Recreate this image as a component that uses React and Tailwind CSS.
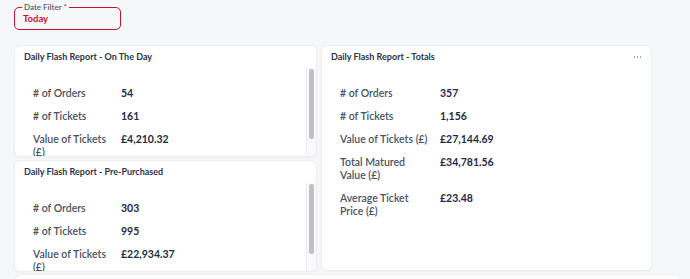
const onTheDay = [
  ['# of Orders', '54'],
  ['# of Tickets', '161'],
  ['Value of Tickets (£)', '£4,210.32'],
];

const prePurchased = [
  ['# of Orders', '303'],
  ['# of Tickets', '995'],
  ['Value of Tickets (£)', '£22,934.37'],
];

const totals = [
  ['# of Orders', '357'],
  ['# of Tickets', '1,156'],
  ['Value of Tickets (£)', '£27,144.69'],
  ['Total Matured Value (£)', '£34,781.56'],
  ['Average Ticket Price (£)', '£23.48'],
];

const Rows = ({ rows, labelWidth }) => (
  <div className="flex flex-col gap-[10px]">
    {rows.map(([label, value]) => (
      <div key={label} className="flex items-start leading-[13px]">
        <div className={`${labelWidth} shrink-0 pr-[10px] text-[10.5px] font-semibold text-[#4b5262]`}>{label}</div>
        <div className="text-[10.5px] font-bold text-[#232c45]">{value}</div>
      </div>
    ))}
  </div>
);

const ScrollCard = ({ title, rows }) => (
  <div className="h-[112px] bg-white rounded-[6px] border border-[#eceef2] shadow-[0_1px_2px_rgba(0,0,0,0.03)] overflow-hidden flex flex-col">
    <div className="h-[22px] shrink-0 flex items-center px-[9px] text-[9px] font-bold text-[#2b3349]">{title}</div>
    <div className="flex-1 flex min-h-0">
      <div className="flex-1 pl-[18px] pt-[19px] overflow-hidden">
        <Rows rows={rows} labelWidth="w-[88px]" />
      </div>
      <div className="w-[10px] shrink-0 border-l border-[#ececec] bg-[#fafafa] pt-[1px] pl-[2px]">
        <div className="w-[5px] h-[70px] rounded-[2px] bg-[#c1c1c1]" />
      </div>
    </div>
  </div>
);

export default function App() {
  return (
    <div className="min-h-screen bg-[#f6f7f9] font-['Lato',sans-serif] pl-[14px] pr-[10px] pt-[7px]">
      <div className="relative w-[107px] h-[23px] border-[1.5px] border-[#c8102e] rounded-[5px]">
        <span className="absolute -top-[6px] left-[7px] px-[2px] bg-[#f6f7f9] text-[8px] leading-[10px] font-semibold text-[#555b68]">Date Filter *</span>
        <div className="pl-[8px] pt-[5px] text-[9.5px] leading-[11px] font-bold text-[#c8102e]">Today</div>
      </div>

      <div className="flex gap-[4px] mt-[15px]">
        <div className="w-[303px] flex flex-col gap-[3px]">
          <ScrollCard title="Daily Flash Report - On The Day" rows={onTheDay} />
          <ScrollCard title="Daily Flash Report - Pre-Purchased" rows={prePurchased} />
        </div>
        <div className="w-[331px] h-[226px] bg-white rounded-[6px] border border-[#eceef2] shadow-[0_1px_2px_rgba(0,0,0,0.03)] flex flex-col">
          <div className="h-[22px] shrink-0 flex items-center justify-between px-[9px] text-[9px] font-bold text-[#2b3349]">
            <span>Daily Flash Report - Totals</span>
            <span className="flex gap-[1.5px] pr-[1px]">
              <span className="w-[1.5px] h-[1.5px] bg-[#9aa0ac]" />
              <span className="w-[1.5px] h-[1.5px] bg-[#9aa0ac]" />
              <span className="w-[1.5px] h-[1.5px] bg-[#9aa0ac]" />
            </span>
          </div>
          <div className="pl-[18px] pt-[19px]">
            <Rows rows={totals} labelWidth="w-[100px]" />
          </div>
        </div>
      </div>

      <div className="mt-[2px] h-[40px] ml-[1px] bg-white rounded-[6px] border border-[#eceef2]" />
    </div>
  );
}
